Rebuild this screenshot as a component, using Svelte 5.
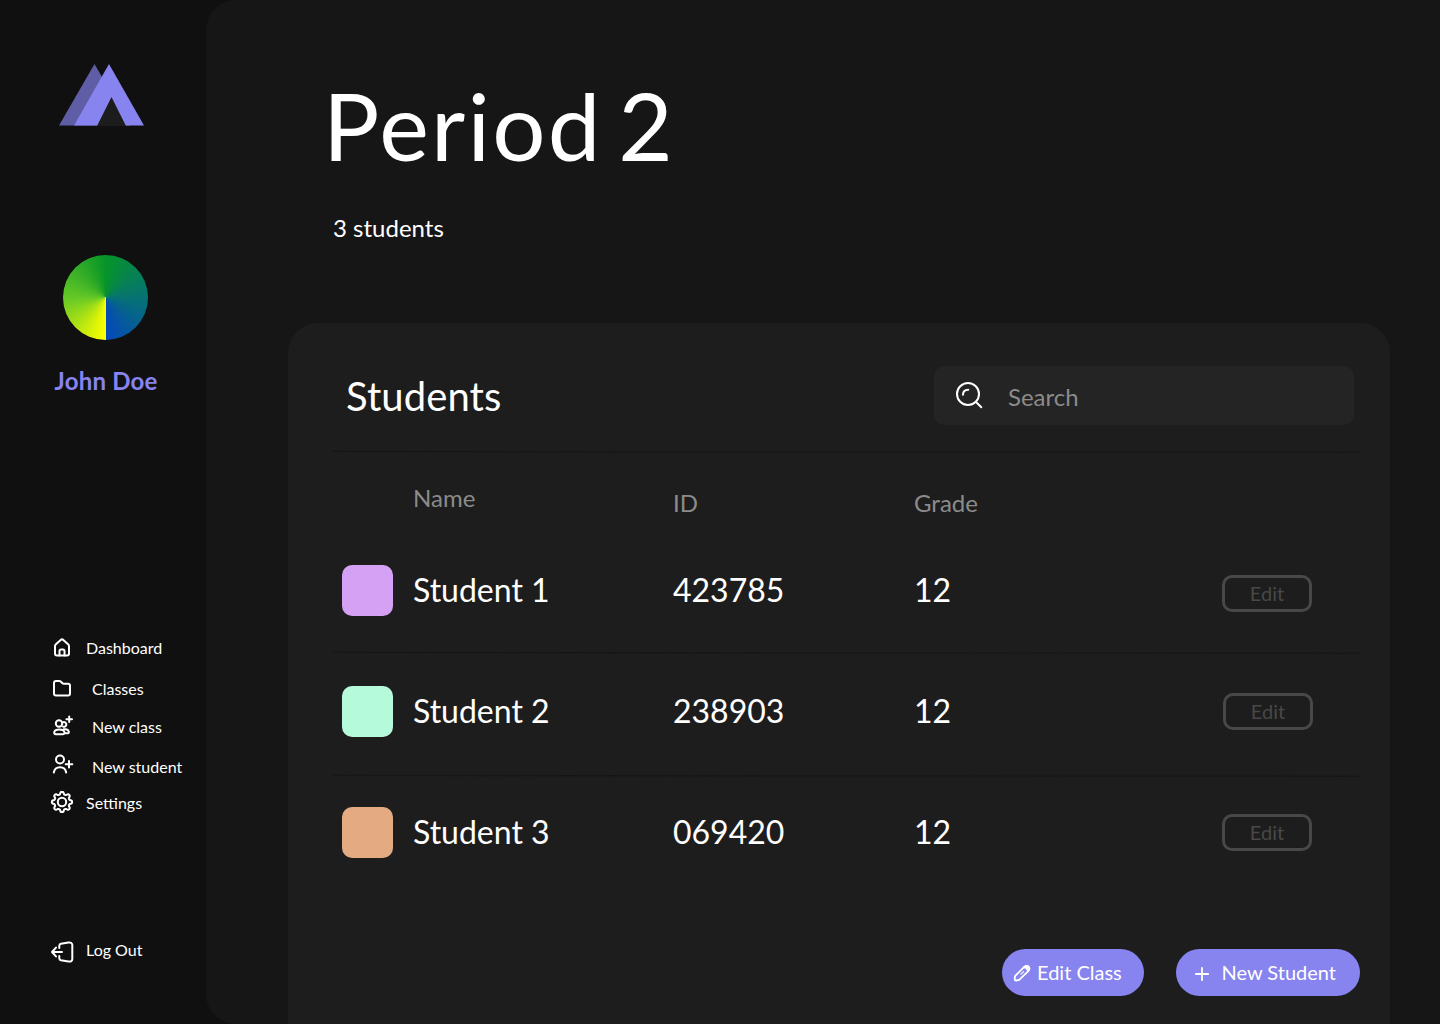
<script>
  const nav = [
    { label: 'Dashboard', icon: 'home' },
    { label: 'Classes', icon: 'folder', indent: true },
    { label: 'New class', icon: 'group', indent: true },
    { label: 'New student', icon: 'person', indent: true },
    { label: 'Settings', icon: 'gear' },
  ];

  const students = [
    { name: 'Student 1', id: '423785', grade: 12, tone: 'violet' },
    { name: 'Student 2', id: '238903', grade: 12, tone: 'mint' },
    { name: 'Student 3', id: '069420', grade: 12, tone: 'orange' },
  ];

  // Outline of the settings gear: eight rounded teeth around the centre.
  const gear = (() => {
    const pts = [];
    for (let i = 0; i <= 96; i++) {
      const a = (i / 96) * Math.PI * 2;
      const wave = Math.tanh(2 * Math.cos(8 * a)) / Math.tanh(2);
      const r = 8.9 + 1.2 * wave;
      pts.push(`${(12 + r * Math.sin(a)).toFixed(2)} ${(12 - r * Math.cos(a)).toFixed(2)}`);
    }
    return 'M' + pts.join('L') + 'Z';
  })();
</script>

{#snippet icon(name)}
  <svg class="icon {name}" viewBox="0 0 24 24" aria-hidden="true">
    {#if name === 'home'}
      <path d="M5 10.2Q5 9 5.900 8.200L10.700 3.900Q12 2.900 13.300 3.900L18.100 8.200Q19 9 19 10.200V17.500Q19 19.500 17 19.500H7Q5 19.500 5 17.500Z" />
      <path d="M9.500 19.500V15Q9.500 13.500 11 13.500H13Q14.500 13.500 14.500 15V19.500" />
    {:else if name === 'folder'}
      <path d="M4 7Q4 5 6 5H9.300Q10.200 5 10.900 5.700L12.200 7Q12.900 7.700 13.800 7.700H18Q20 7.700 20 9.700V17.500Q20 19.500 18 19.500H6Q4 19.500 4 17.500Z" />
    {:else if name === 'group'}
      <circle cx="9" cy="9.500" r="3.200" />
      <path d="M12.800 8.300A2.400 2.400 0 1 1 13 12.600" />
      <path d="M6 20.200H12.500Q14.900 20.200 14.400 18C13.400 14.600 5.200 14.600 4.300 18Q3.800 20.200 6 20.200Z" />
      <path d="M13.800 15.300C16.500 14.900 18.300 15.800 18.800 17.500Q19.200 19.200 17.500 19.200H15" />
      <path d="M19.200 2.500V8.100M16.400 5.300H22" />
    {:else if name === 'person'}
      <circle cx="10" cy="7.500" r="4" />
      <path d="M3.800 20.500C5 13.400 15 13.400 16.200 20.500M19 9V15.500M15.700 12.200H22.300" />
    {:else if name === 'gear'}
      <path d={gear} />
      <circle cx="12" cy="12" r="4.200" />
    {:else if name === 'logout'}
      <path d="M9.300 8V5.800Q9.300 4.200 10.900 3.800L18.500 2.600Q22.300 2.200 22.300 5V19Q22.300 21.900 18.500 21.400L10.900 20.200Q9.300 19.800 9.300 18.200V16" />
      <path d="M12 12H2.400M6 7.600L2 12L6 16.400" />
    {/if}
  </svg>
{/snippet}

{#snippet divider()}
  <svg class="divider" viewBox="0 0 1027 3" aria-hidden="true"><path d="M0 1.400L1027 2.300" /></svg>
{/snippet}

<div class="app">
  <aside>
    <svg class="logo" viewBox="0 0 86 62" aria-label="Logo">
      <path class="back" d="M35.500 0L71 61.500H0Z" />
      <path class="front" d="M50 0L85 61.500H15Z" />
      <path class="door" d="M52.500 33L67 62H38Z" />
    </svg>
    <div class="avatar"></div>
    <p class="user">John Doe</p>
    <nav>
      {#each nav as item}
        <a href="#top" class:indent={item.indent}>{@render icon(item.icon)}<span>{item.label}</span></a>
      {/each}
    </nav>
    <a class="exit" href="#top">{@render icon('logout')}<span>Log Out</span></a>
  </aside>

  <main>
    <h1>Period 2</h1>
    <p class="count">3 students</p>

    <section class="card">
      <header>
        <h2>Students</h2>
        <div class="search">
          <svg viewBox="0 0 28 28" aria-hidden="true">
            <circle cx="13" cy="13" r="11" />
            <path d="M8 13.800C8 10.600 10 8.700 13.300 8.700M21 21L26.300 26.300" />
          </svg>
          <span>Search</span>
        </div>
      </header>
      {@render divider()}
      <div class="grid head">
        <span class="name">Name</span>
        <span>ID</span>
        <span>Grade</span>
      </div>
      {#each students as s, i}
        {#if i > 0}{@render divider()}{/if}
        <div class="grid row">
          <span class="swatch {s.tone}"></span>
          <span class="cell name">{s.name}</span>
          <span class="cell">{s.id}</span>
          <span class="cell">{s.grade}</span>
          <button class="edit">Edit</button>
        </div>
      {/each}
      <footer>
        <button class="pill edit-class">
          <svg viewBox="0 0 18 18" aria-hidden="true">
            <path d="M2 12.200L10.700 3.300Q13.200 .9 15.400 2.700Q17.400 4.900 15 7.300L6.200 15.900L3.200 16.500Q1.700 16.700 1.700 15Z" />
            <path class="cap" d="M10.700 3.300Q13.400 .8 15.500 2.600Q17.400 4.700 14.900 7.300Q14.800 3.700 10.700 3.300Z" />
            <path class="tip" d="M8 10.200L10.600 7.600" />
          </svg>
          <span>Edit Class</span>
        </button>
        <button class="pill new-student">
          <svg viewBox="0 0 18 18" aria-hidden="true"><path d="M9 2.800V15.200M2.800 9H15.200" /></svg>
          <span>New Student</span>
        </button>
      </footer>
    </section>
  </main>
</div>

<style>
  :global(body) {
    background: #101010;
  }
  .app {
    display: flex;
    height: 1024px;
    overflow: hidden;
    background: #101010;
    color: #fff;
    font-family: Lato, 'Liberation Sans', sans-serif;
  }
  h1, h2, p {
    margin: 0;
    font-weight: 400;
    white-space: nowrap;
  }
  a {
    color: inherit;
    text-decoration: none;
  }
  button {
    box-sizing: border-box;
    padding: 0;
    border: 0;
    background: none;
    font: inherit;
    color: inherit;
  }
  svg {
    display: block;
    flex: none;
    fill: none;
    stroke: #fff;
    stroke-linecap: round;
    stroke-linejoin: round;
  }

  aside {
    box-sizing: border-box;
    display: flex;
    flex: none;
    flex-direction: column;
    width: 206px;
    padding-top: 64px;
  }
  .logo {
    width: 86px;
    height: 62px;
    margin-left: 59px;
    stroke: none;
  }
  .back { fill: #5f5da5; }
  .front { fill: #8784ef; }
  .door { fill: #1c1c1c; }
  .avatar {
    width: 85px;
    height: 85px;
    margin: 129px 0 0 63px;
    border-radius: 50%;
    background: conic-gradient(from 180deg, #ff0 0deg, #64c826 90deg, #069428 180deg, #06756e 265deg, #0548b9 360deg);
  }
  .user {
    width: 212px;
    margin-top: 26px;
    color: #8784ef;
    font-size: 24px;
    font-weight: 700;
    letter-spacing: .2px;
    line-height: 30px;
    text-align: center;
  }
  nav {
    display: grid;
    grid-template-rows: 41px 38px 40px 36px 20px;
    margin-top: 242px;
  }
  nav a, .exit {
    display: flex;
    align-items: center;
    gap: 12px;
    height: 20px;
    padding-left: 50px;
    font-size: 16px;
    line-height: 20px;
    white-space: nowrap;
  }
  nav a.indent { gap: 18px; }
  .icon {
    width: 24px;
    height: 24px;
    stroke-width: 2;
  }
  .folder, .group, .gear { margin-bottom: 2px; }
  .person { margin-bottom: 6px; }
  .logout { margin-top: 3px; }
  .exit { margin-top: 127px; }

  main {
    box-sizing: border-box;
    flex: 1;
    padding: 75px 50px 0 82px;
    border-radius: 30px 0 0 30px;
    background: #161616;
  }
  h1 {
    margin-left: 35px;
    font-size: 94px;
    letter-spacing: 2.200px;
    line-height: 100px;
    word-spacing: -10.500px;
  }
  .count {
    margin: 38px 0 80px 45px;
    font-size: 24px;
    line-height: 30px;
  }
  .card {
    box-sizing: border-box;
    height: 701px;
    padding-top: 43px;
    border-radius: 30px 30px 0 0;
    background: #1d1d1d;
  }
  header {
    display: flex;
    justify-content: space-between;
    height: 59px;
    padding: 0 36px 25px 58px;
  }
  h2 {
    font-size: 40px;
    letter-spacing: .1px;
    line-height: 60px;
  }
  .search {
    display: flex;
    box-sizing: border-box;
    align-items: center;
    gap: 25px;
    width: 420px;
    height: 59px;
    padding: 0 0 1px 21px;
    border-radius: 10px;
    background: #242424;
    color: #8b8b8b;
    font-size: 24px;
    line-height: 30px;
  }
  .search svg {
    width: 28px;
    height: 28px;
    stroke-width: 2;
  }
  .search span { padding-top: 3px; }
  .divider {
    width: 1027px;
    height: 3px;
    margin-left: 45px;
    stroke: #161616;
    stroke-width: 1.200;
  }
  .grid {
    display: grid;
    grid-template-columns: 71px 260px 241px 308px 90px;
    margin-left: 54px;
  }
  .name { grid-column: 2; }
  .head {
    align-items: end;
    height: 35px;
    margin: 30px 0 47px 54px;
    color: #8b8b8b;
    font-size: 24px;
    line-height: 30px;
  }
  .head .name { align-self: start; }
  .row { height: 51px; }
  .divider + .row { margin-top: 32px; }
  .row + .divider { margin-top: 35px; }
  .row:has(.mint) + .divider { margin-top: 37px; }
  .row:has(.orange) { margin-top: 30px; }
  .swatch {
    width: 51px;
    height: 51px;
    border-radius: 10px;
  }
  .violet { background: #d5a1f5; }
  .mint { background: #b6fadc; }
  .orange { background: #e4ab83; }
  .cell {
    font-size: 32px;
    line-height: 49px;
  }
  .edit {
    align-self: center;
    width: 90px;
    height: 37px;
    border: 3px solid #484848;
    border-radius: 10px;
    color: #484848;
    font-size: 20px;
    line-height: 31px;
  }
  .row:has(.violet) .edit { margin-top: 6px; }
  .row:has(.mint) .edit { margin-left: 1px; }
  footer {
    display: flex;
    justify-content: flex-end;
    gap: 32px;
    margin-top: 91px;
    padding-right: 30px;
  }
  .pill {
    display: flex;
    align-items: center;
    height: 47px;
    border-radius: 24px;
    background: #8784ef;
    font-size: 20px;
    line-height: 24px;
    white-space: nowrap;
  }
  .pill svg {
    width: 18px;
    height: 18px;
    margin-top: 2px;
    stroke-width: 1.800;
  }
  .edit-class svg { margin-top: 0; }
  .pill span { margin-bottom: 2px; }
  .cap { fill: #fff; }
  .tip { stroke-width: 1.200; }
  .edit-class {
    gap: 6px;
    width: 142px;
    padding-left: 11px;
  }
  .new-student {
    gap: 10.500px;
    width: 184px;
    padding-left: 17px;
  }
</style>
